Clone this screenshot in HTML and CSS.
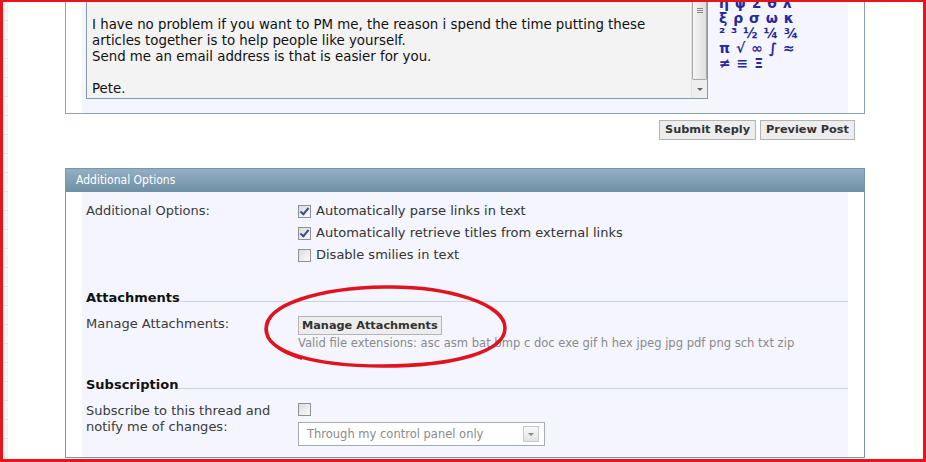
FILE: index.html
```html
<!DOCTYPE html>
<html>
<head>
<meta charset="utf-8">
<link rel="stylesheet" href="styles.css">
</head>
<body>
<div class="frame">
  <div class="ruler"></div>
  <div class="page">
    <div class="reply-box">
      <div class="reply-inner">
        <div class="editor">
          <div class="editor-text">
            <p>I have no problem if you want to PM me, the reason i spend the time putting these<br>articles together is to help people like yourself.<br>Send me an email address is that is easier for you.</p>
            <p>Pete.</p>
          </div>
          <div class="scrollbar">
            <div class="thumb"><span class="grip"></span></div>
            <div class="arrow"></div>
          </div>
        </div>
        <div class="symbols">
          <div>η ψ Σ θ λ</div>
          <div>ξ ρ σ ω κ</div>
          <div>² ³ ½ ¼ ¾</div>
          <div>π √ ∞ ∫ ≈</div>
          <div>≠ ≡ Ξ</div>
        </div>
      </div>
    </div>
    <div class="actions">
      <button class="btn">Submit Reply</button>
      <button class="btn">Preview Post</button>
    </div>
    <div class="panel">
      <div class="panel-head">Additional Options</div>
      <div class="panel-body">
        <div class="panel-inner">
          <div class="row">
            <div class="label">Additional Options:</div>
            <div class="options">
              <div class="opt"><span class="cb checked"></span>Automatically parse links in text</div>
              <div class="opt"><span class="cb checked"></span>Automatically retrieve titles from external links</div>
              <div class="opt"><span class="cb"></span>Disable smilies in text</div>
            </div>
          </div>
          <div class="section"><h3>Attachments</h3><span class="rule"></span></div>
          <div class="row row-attach">
            <div class="label">Manage Attachments:</div>
            <div class="field">
              <button class="btn btn-attach">Manage Attachments</button>
              <div class="hint">Valid file extensions: asc asm bat bmp c doc exe gif h hex jpeg jpg pdf png sch txt zip</div>
            </div>
          </div>
          <div class="section section-sub"><h3>Subscription</h3><span class="rule"></span></div>
          <div class="row row-sub">
            <div class="label">Subscribe to this thread and<br>notify me of changes:</div>
            <div class="field">
              <span class="cb cb-block"></span>
              <div class="select"><span>Through my control panel only</span><span class="select-btn"></span></div>
            </div>
          </div>
        </div>
      </div>
    </div>
  </div>
  <svg class="circle" width="256" height="92" viewBox="0 0 256 92">
    <path d="M127 5 C190 4 247 22 247 46 C247 70 196 84 124 84 C55 84 8 70 8 47 C8 22 62 6 127 5 Z" fill="none" stroke="#e0141f" stroke-width="3.5"/>
    <path d="M40 18 C18 26 9 36 9 47 C9 60 20 70 44 77" fill="none" stroke="#e0141f" stroke-width="2"/>
  </svg>
</div>
</body>
</html>
```
FILE: styles.css
```css
html, body {
  margin: 0;
  padding: 0;
  background: #ffffff;
}

.frame {
  position: relative;
  width: 926px;
  height: 462px;
  box-sizing: border-box;
  border-style: solid;
  border-color: #e8141c;
  border-width: 2px 3px 3px 3px;
  overflow: hidden;
  display: flex;
  font-family: "DejaVu Sans", Verdana, sans-serif;
  font-size: 13px;
  color: #333;
}

.ruler {
  width: 5px;
  flex: none;
  background: repeating-linear-gradient(to bottom, #f4f4f4 0, #f4f4f4 18px, #e2e2e2 18px, #e2e2e2 19px);
}

.page {
  flex: 1;
  padding-left: 57px;
}

/* reply box */
.reply-box {
  width: 800px;
  box-sizing: border-box;
  border: 1px solid #8a9fb1;
  border-top: none;
  padding: 0 16px;
  background: #fff;
}

.reply-inner {
  background: #f4f5fe;
  display: flex;
  align-items: flex-start;
  padding: 0 0 14px 4px;
}

.editor {
  width: 622px;
  height: 97px;
  box-sizing: border-box;
  border: 1px solid #8798a8;
  border-top: none;
  background: #f3f3f3;
  display: flex;
}

.editor-text {
  flex: 1;
  padding: 15px 0 0 5px;
  color: #111;
  font-size: 13.35px;
  line-height: 16px;
}

.editor-text p {
  margin: 0 0 16px 0;
}

.scrollbar {
  width: 15px;
  flex: none;
  background: #eeeeee;
  border-left: 1px solid #e2e2e2;
  display: flex;
  flex-direction: column;
}

.thumb {
  height: 78px;
  box-sizing: border-box;
  border: 1px solid #a8a8a8;
  border-top: none;
  border-radius: 0 0 2px 2px;
  background: linear-gradient(to right, #f4f4f4, #dedede);
  display: flex;
  justify-content: center;
  padding-top: 6px;
}

.grip {
  width: 6px;
  height: 5px;
  background: repeating-linear-gradient(to bottom, #8a8a8a 0, #8a8a8a 1px, transparent 1px, transparent 2px);
}

.arrow {
  margin: 8px auto 0;
  width: 0;
  height: 0;
  border-left: 3px solid transparent;
  border-right: 3px solid transparent;
  border-top: 3px solid #666;
}

.symbols {
  margin: -6px 0 0 11px;
  font-weight: bold;
  color: #26299b;
  line-height: 15px;
  font-size: 14px;
  word-spacing: 1px;
  white-space: nowrap;
}

/* buttons */
.actions {
  width: 800px;
  box-sizing: border-box;
  display: flex;
  justify-content: flex-end;
  gap: 4px;
  padding-right: 10px;
  margin-top: 6px;
}

.btn {
  font-family: "DejaVu Sans", Verdana, sans-serif;
  font-size: 11.3px;
  font-weight: bold;
  color: #333;
  height: 20px;
  padding: 0 5px;
  margin: 0;
  border: 1px solid #b4b4b4;
  background: #ededed;
  border-radius: 0;
  line-height: 18px;
}

/* panel */
.panel {
  width: 800px;
  box-sizing: border-box;
  border: 1px solid #7d95a8;
  margin-top: 28px;
}

.panel-head {
  height: 23px;
  line-height: 23px;
  padding-left: 10px;
  background: linear-gradient(to bottom, #93b0c3, #6e8ea5);
  color: #fff;
  font-family: "DejaVu Sans Condensed", "DejaVu Sans", sans-serif;
  font-stretch: condensed;
  font-size: 12px;
}

.panel-body {
  padding: 0 16px;
  background: #fff;
}

.panel-inner {
  background: #f4f5fe;
  padding: 8px 0 11px 4px;
}

.row {
  display: flex;
}

.label {
  width: 212px;
  flex: none;
  line-height: 22px;
  color: #3a3a3a;
}

.options {
  line-height: 22px;
  color: #333;
}

.opt {
  display: flex;
  align-items: center;
}

.cb {
  width: 13px;
  height: 13px;
  box-sizing: border-box;
  border: 1px solid #8e9196;
  background: linear-gradient(135deg, #dcdcdc, #fbfbfb);
  margin-right: 5px;
  flex: none;
  position: relative;
}

.cb.checked::after {
  content: "";
  position: absolute;
  left: 3px;
  top: 0px;
  width: 3px;
  height: 7px;
  border: solid #3c4f8c;
  border-width: 0 2px 2px 0;
  transform: rotate(40deg);
}

.section {
  display: flex;
  align-items: flex-start;
  margin-top: 23px;
}

.section h3 {
  margin: 0;
  font-size: 13px;
  line-height: 18px;
  font-weight: bold;
  color: #111;
}

.rule {
  flex: 1;
  height: 1px;
  background: #c9d2e4;
  margin-top: 12px;
}

.row-attach {
  margin-top: 9px;
}

.row-attach .label,
.row-sub .label {
  line-height: 16px;
}

.btn-attach {
  height: 19px;
  line-height: 17px;
  padding: 0 3px;
  display: block;
}

.hint {
  font-size: 11.55px;
  line-height: 14px;
  color: #8a8a8a;
  margin-top: 1px;
}

.section-sub {
  margin-top: 26px;
}

.row-sub {
  margin-top: 9px;
}

.cb-block {
  display: block;
}

.select {
  margin-top: 6px;
  width: 247px;
  height: 24px;
  box-sizing: border-box;
  border: 1px solid #a3abba;
  background: #fff;
  display: flex;
  align-items: center;
  justify-content: space-between;
  padding: 0 5px 0 8px;
  font-size: 11.5px;
  color: #8a8a8a;
}

.select-btn {
  width: 16px;
  height: 16px;
  box-sizing: border-box;
  border: 1px solid #c4c8d0;
  background: linear-gradient(to bottom, #f8f8f8, #e4e4e4);
  position: relative;
}

.select-btn::after {
  content: "";
  position: absolute;
  left: 4px;
  top: 6px;
  border-left: 3px solid transparent;
  border-right: 3px solid transparent;
  border-top: 3px solid #888;
}

.circle {
  position: absolute;
  left: 255px;
  top: 280px;
  pointer-events: none;
}
```
